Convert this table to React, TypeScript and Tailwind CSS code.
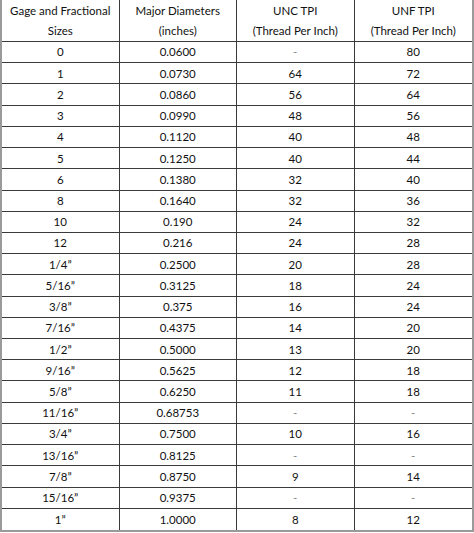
const header = [
  ["Gage and Fractional", "Sizes"],
  ["Major Diameters", "(inches)"],
  ["UNC TPI", "(Thread Per Inch)"],
  ["UNF TPI", "(Thread Per Inch)"],
];

const rows: string[][] = [
  ["0", "0.0600", "-", "80"],
  ["1", "0.0730", "64", "72"],
  ["2", "0.0860", "56", "64"],
  ["3", "0.0990", "48", "56"],
  ["4", "0.1120", "40", "48"],
  ["5", "0.1250", "40", "44"],
  ["6", "0.1380", "32", "40"],
  ["8", "0.1640", "32", "36"],
  ["10", "0.190", "24", "32"],
  ["12", "0.216", "24", "28"],
  ["1/4\u201d", "0.2500", "20", "28"],
  ["5/16\u201d", "0.3125", "18", "24"],
  ["3/8\u201d", "0.375", "16", "24"],
  ["7/16\u201d", "0.4375", "14", "20"],
  ["1/2\u201d", "0.5000", "13", "20"],
  ["9/16\u201d", "0.5625", "12", "18"],
  ["5/8\u201d", "0.6250", "11", "18"],
  ["11/16\u201d", "0.68753", "-", "-"],
  ["3/4\u201d", "0.7500", "10", "16"],
  ["13/16\u201d", "0.8125", "-", "-"],
  ["7/8\u201d", "0.8750", "9", "14"],
  ["15/16\u201d", "0.9375", "-", "-"],
  ["1\u201d", "1.0000", "8", "12"],
];

export default function App() {
  return (
    <div className="w-[474px] h-[533px] bg-white font-['Lato','Liberation_Sans',sans-serif] text-[11.5px] text-[#111]">
      <div className="h-[532px] grid grid-cols-4 grid-rows-[42px_repeat(23,1fr)] border-l-2 border-r-2 border-b-2 border-[#9a9a9a]">
        {header.map((h, i) => (
          <div
            key={i}
            className={`flex flex-col items-center justify-center leading-[20px] border-b border-[#3a3a3a] ${i < 3 ? "border-r" : ""}`}
          >
            <span>{h[0]}</span>
            <span>{h[1]}</span>
          </div>
        ))}
        {rows.map((r, ri) =>
          r.map((c, ci) => (
            <div
              key={`${ri}-${ci}`}
              className={`flex items-center justify-center border-[#3a3a3a] ${ci < 3 ? "border-r" : ""} ${ri < rows.length - 1 ? "border-b" : ""} ${c === "-" ? "text-[#888]" : ""}`}
            >
              {c}
            </div>
          ))
        )}
      </div>
    </div>
  );
}
